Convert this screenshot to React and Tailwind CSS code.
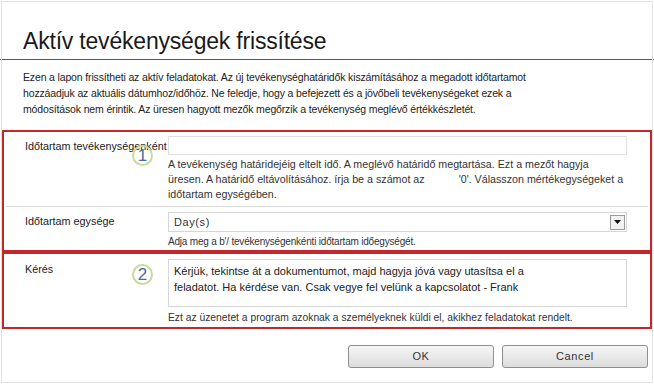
import React from 'react';

const font = { fontFamily: '"Liberation Sans", Arial, sans-serif' };

function Badge({ n, className }) {
  return (
    <div className={"absolute w-[21px] h-[21px] rounded-full border-2 border-[#c9da9f] flex items-center justify-center text-[17px] leading-none text-[#4d6a9c] " + className}>
      {n}
    </div>
  );
}

function Row({ label, children, className = '' }) {
  return (
    <div className={"flex " + className}>
      <div className="w-[164px] pl-[21px] text-[10.8px] text-[#222] shrink-0 whitespace-nowrap">{label}</div>
      <div className="w-[459px]">{children}</div>
    </div>
  );
}

export default function App() {
  return (
    <div className="w-[654px] h-[384px] bg-white relative overflow-hidden" style={font}>
      <div className="absolute inset-0 m-[1px] border border-[#e2e2e2] pointer-events-none" />

      {/* header */}
      <div className="pt-[28px] pl-[23px] pb-[4px] border-b border-[#5a5a5a]">
        <h1 className="text-[23px] leading-[27px] text-[#1a1a1a] tracking-[-0.2px]">Aktív tevékenységek frissítése</h1>
      </div>

      <p className="px-[23px] pt-[9px] text-[10.5px] leading-[16px] text-[#222] tracking-[-0.15px]">
        Ezen a lapon frissítheti az aktív feladatokat. Az új tevékenységhatáridők kiszámításához a megadott időtartamot<br />
        hozzáadjuk az aktuális dátumhoz/időhöz. Ne feledje, hogy a befejezett és a jövőbeli tevékenységeket ezek a<br />
        módosítások nem érintik. Az üresen hagyott mezők megőrzik a tevékenység meglévő értékkészletét.
      </p>

      {/* box 1 */}
      <div className="mx-[2px] w-[650px] mt-[13px] border-2 border-[#c1272d]">
        <Row label={<div className="pt-[6px]">Időtartam tevékenységenként</div>}>
          <div className="pt-[4px]">
            <div className="h-[19px] border border-[#e0e0e0]" />
            <div className="pt-[2px] text-[10.7px] leading-[15px] text-[#333] whitespace-nowrap">
              A tevékenység határidejéig eltelt idő. A meglévő határidő megtartása. Ezt a mezőt hagyja<br />
              üresen. A határidő eltávolításához. írja be a számot az<span className="inline-block w-[34px]" />'0'. Válasszon mértékegységeket a<br />
              időtartam egységében.
            </div>
          </div>
        </Row>
        <div className="mx-[2px] mt-[4px] border-t border-[#dadada]" />
        <Row label={<div className="pt-[6px]">Időtartam egysége</div>}>
          <div className="pt-[5px] pb-[1px]">
            <div className="h-[20px] border border-[#d6d6d6] flex items-center justify-between pl-[5px] pr-[1px]">
              <span className="text-[11px] tracking-[0.6px] text-[#333]">Day(s)</span>
              <div className="w-[15px] h-[15px] border border-[#9a9a9a] bg-[#f2f2f2] flex items-center justify-center">
                <svg width="7" height="4" viewBox="0 0 7 4"><path d="M0 0h7L3.5 4z" fill="#111" /></svg>
              </div>
            </div>
            <div className="pt-[2px] text-[10px] leading-[15px] tracking-[-0.2px] text-[#333]">Adja meg a b'/ tevékenységenkénti időtartam időegységét.</div>
          </div>
        </Row>
      </div>

      {/* box 2 */}
      <div className="mx-[2px] w-[650px] border-2 border-[#c1272d]">
        <Row label={<div className="pt-[7px]">Kérés</div>}>
          <div className="pt-[5px] pb-[2px]">
            <div className="h-[48px] border border-[#d6d6d6] px-[5px] pt-[3px] text-[11px] leading-[16px] text-[#222]">
              Kérjük, tekintse át a dokumentumot, majd hagyja jóvá vagy utasítsa el a<br />
              feladatot. Ha kérdése van. Csak vegye fel velünk a kapcsolatot - Frank
            </div>
            <div className="pt-[4px] text-[10.3px] leading-[14px] text-[#333]">Ezt az üzenetet a program azoknak a személyeknek küldi el, akikhez feladatokat rendelt.</div>
          </div>
        </Row>
      </div>

      {/* buttons */}
      <div className="flex justify-end gap-[8px] pr-[6px] pt-[16px]">
        <button className="w-[146px] h-[23px] rounded-[3px] border border-[#8f8f8f] bg-gradient-to-b from-[#f6f6f6] to-[#dcdcdc] text-[11px] text-[#333] tracking-[0.6px]">OK</button>
        <button className="w-[146px] h-[23px] rounded-[3px] border border-[#8f8f8f] bg-gradient-to-b from-[#f6f6f6] to-[#dcdcdc] text-[11px] text-[#333] tracking-[0.6px]">Cancel</button>
      </div>

      <Badge n="1" className="left-[132px] top-[145px]" />
      <Badge n="2" className="left-[132px] top-[264px]" />
    </div>
  );
}
